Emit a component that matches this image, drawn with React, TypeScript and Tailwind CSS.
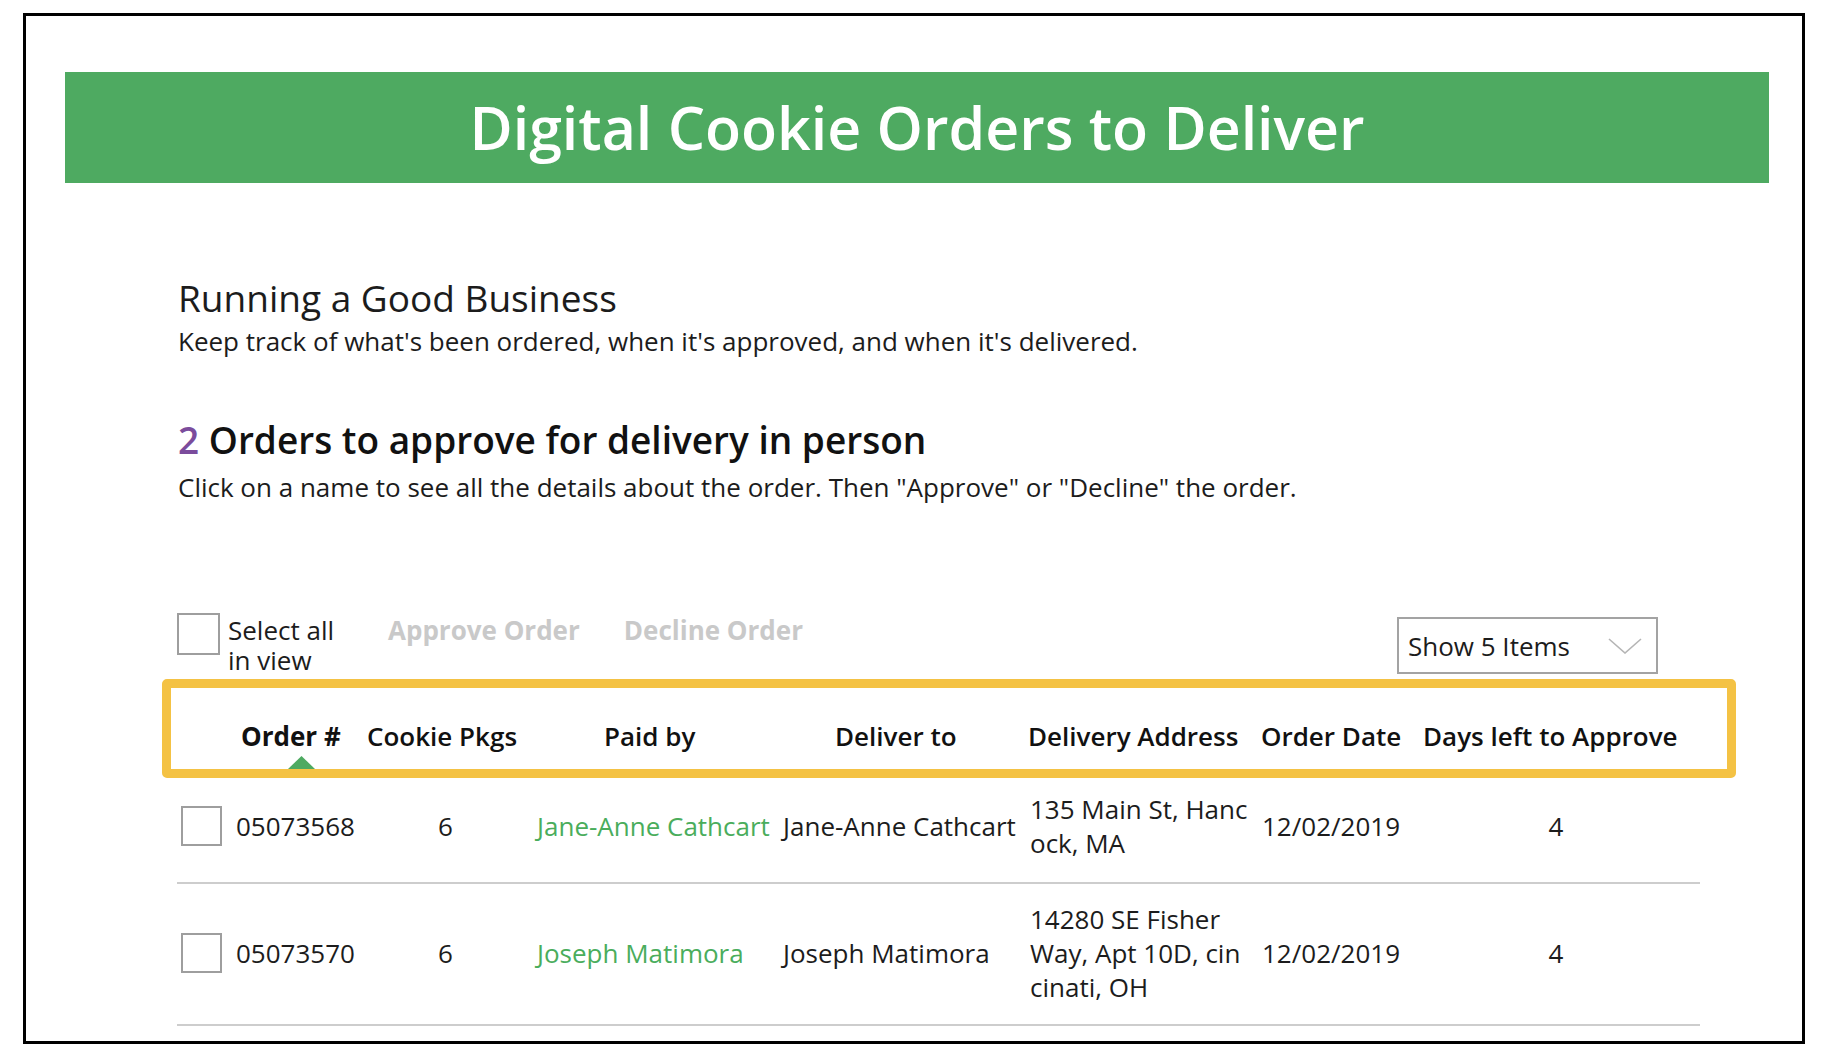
import React from "react";

type Row = {
  order: string;
  pkgs: string;
  paidBy: string;
  deliverTo: string;
  address: string[];
  date: string;
  days: string;
  rowClass: string;
};

const rows: Row[] = [
  {
    order: "05073568",
    pkgs: "6",
    paidBy: "Jane-Anne Cathcart",
    deliverTo: "Jane-Anne Cathcart",
    address: ["135 Main St, Hanc", "ock, MA"],
    date: "12/02/2019",
    days: "4",
    rowClass: "pt-[14px] pb-[22px]",
  },
  {
    order: "05073570",
    pkgs: "6",
    paidBy: "Joseph Matimora",
    deliverTo: "Joseph Matimora",
    address: ["14280 SE Fisher", "Way, Apt 10D, cin", "cinati, OH"],
    date: "12/02/2019",
    days: "4",
    rowClass: "pt-[18px] pb-[20px]",
  },
];

const gridCols =
  "grid grid-cols-[54px_130px_169px_246px_246px_233px_157px_288px]";

function Checkbox({ className }: { className: string }) {
  return (
    <div className={"border-2 border-[#9e9e9e] bg-white " + className} />
  );
}

export default function App() {
  return (
    <div className="min-h-screen bg-white font-['Open_Sans',sans-serif] text-[#1c1c1c]">
      <div className="pl-[23px] pt-[13px]">
        <div className="w-[1782px] h-[1031px] border-[3px] border-black overflow-hidden">
          {/* Banner */}
          <div className="mt-[56px] ml-[39px] w-[1704px] h-[111px] bg-[#4eaa61] flex items-center justify-center">
            <h1 className="text-white text-[59px] font-semibold leading-none">
              Digital Cookie Orders to Deliver
            </h1>
          </div>

          <div className="pl-[152px]">
            {/* Section 1 */}
            <div className="mt-[94px] text-[37px] leading-[42px]">
              Running a Good Business
            </div>
            <div className="mt-[6px] text-[26px] leading-[32px]">
              Keep track of what's been ordered, when it's approved, and when it's delivered.
            </div>

            {/* Section 2 */}
            <div className="mt-[62px] text-[37px] leading-[42px] font-semibold text-[#111]">
              <span className="text-[#7b4c9c]">2</span> Orders to approve for delivery in person
            </div>
            <div className="mt-[10px] text-[26px] leading-[32px]">
              Click on a name to see all the details about the order. Then "Approve" or "Decline" the order.
            </div>

            {/* Toolbar */}
            <div className="mt-[110px] -ml-px w-[1481px] flex items-start">
              <Checkbox className="w-[43px] h-[42px]" />
              <div className="ml-[8px] mt-[2px] w-[112px] text-[26px] leading-[30px]">
                Select all in view
              </div>
              <div className="ml-[48px] mt-[2px] text-[26px] leading-[30px] font-bold text-[#c9c9c9]">
                Approve Order
              </div>
              <div className="ml-[44px] mt-[2px] text-[26px] leading-[30px] font-bold text-[#c9c9c9]">
                Decline Order
              </div>
              <div className="ml-auto mt-[4px] w-[261px] h-[57px] border-2 border-[#a3a3a3] flex items-center pl-[9px] pr-[14px]">
                <span className="text-[26px] leading-[32px]">Show 5 Items</span>
                <svg
                  className="ml-auto"
                  width="34"
                  height="16"
                  viewBox="0 0 34 16"
                  fill="none"
                >
                  <path
                    d="M1 1 L17 15 L33 1"
                    stroke="#b5b5b5"
                    strokeWidth="1.6"
                  />
                </svg>
              </div>
            </div>

            {/* Table */}
            <div className="mt-[4px] -ml-px w-[1523px]">
              <div className="-ml-[15px] w-[1574px] h-[99px] border-[9px] border-[#f4c244] rounded-[5px] relative pl-[6px]">
                <div className={gridCols + " pt-[32px] text-[26px] leading-[32px] font-semibold text-[#111] whitespace-nowrap"}>
                  <div />
                  <div className="pl-[10px] font-bold">Order #</div>
                  <div className="pl-[6px]">Cookie Pkgs</div>
                  <div className="pl-[74px]">Paid by</div>
                  <div className="pl-[59px]">Deliver to</div>
                  <div className="pl-[6px]">Delivery Address</div>
                  <div className="pl-[6px]">Order Date</div>
                  <div className="pl-[11px]">Days left to Approve</div>
                </div>
                <svg
                  className="absolute left-[117px] bottom-0"
                  width="27"
                  height="13"
                  viewBox="0 0 27 13"
                >
                  <path d="M13.5 0 L27 13 L0 13 Z" fill="#4eaa61" />
                </svg>
              </div>

              {rows.map((r) => (
                <div
                  key={r.order}
                  className={gridCols + " items-center border-b-2 border-[#cdcdcd] text-[26px] leading-[34px] whitespace-nowrap " + r.rowClass}
                >
                  <div>
                    <Checkbox className="ml-[4px] w-[41px] h-[40px]" />
                  </div>
                  <div className="pl-[5px]">{r.order}</div>
                  <div className="text-center">{r.pkgs}</div>
                  <div className="pl-[7px] text-[#4aad5c]">{r.paidBy}</div>
                  <div className="pl-[7px]">{r.deliverTo}</div>
                  <div className="pl-[8px]">
                    {r.address.map((l) => (
                      <div key={l}>{l}</div>
                    ))}
                  </div>
                  <div className="pl-[7px]">{r.date}</div>
                  <div className="text-center">{r.days}</div>
                </div>
              ))}
            </div>
          </div>
        </div>
      </div>
    </div>
  );
}
